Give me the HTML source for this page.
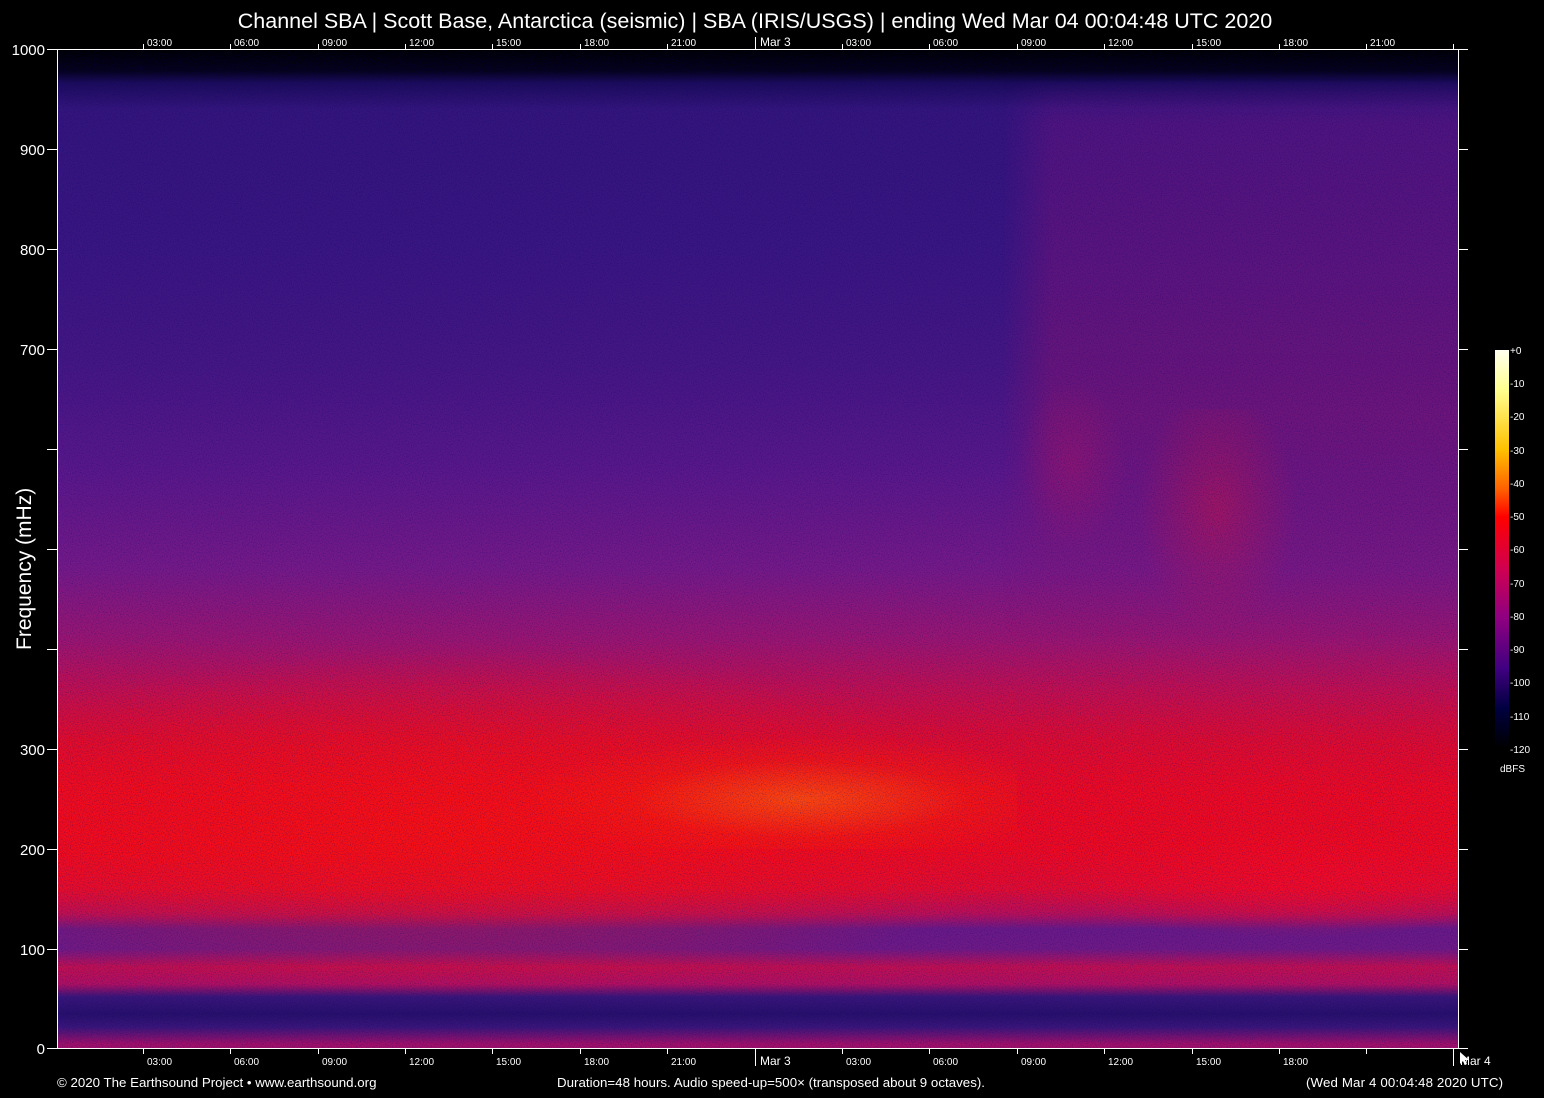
<!DOCTYPE html>
<html><head><meta charset="utf-8"><style>
html,body{margin:0;padding:0;background:#000;}
body{width:1544px;height:1098px;position:relative;overflow:hidden;font-family:"Liberation Sans",sans-serif;color:#fff;}
.t{position:absolute;white-space:nowrap;}
#plot{position:absolute;left:57px;top:49px;width:1401px;height:999px;overflow:hidden;
background:linear-gradient(to bottom,#000 0px,#05021a 22px,#1c0c5a 34px,#34157a 60px,#3a1680 200px,#461782 320px,#5a1888 420px,#761a86 520px,#9a1670 590px,#c01050 640px,#dc0c30 690px,#ec0a22 740px,#ee0a20 800px,#e20c30 840px,#b81058 865px,#6a1a86 880px,#701a84 900px,#c01050 918px,#b01060 935px,#3a1678 948px,#28106a 965px,#3a1678 978px,#a01068 995px);}
.ov{position:absolute;}
</style></head><body>
<div class="t" style="left:0;width:1510px;text-align:center;top:9px;font-size:21.5px;">Channel SBA | Scott Base, Antarctica (seismic) | SBA (IRIS/USGS) | ending Wed Mar 04 00:04:48 UTC 2020</div>
<div id="plot">
 <div class="ov" style="left:-200px;top:600px;width:1200px;height:350px;background:radial-gradient(ellipse at 50% 50%,rgba(255,20,10,0.6),rgba(255,0,0,0) 70%);"></div>
 <div class="ov" style="left:480px;top:690px;width:480px;height:110px;background:radial-gradient(ellipse at 55% 55%,rgba(255,90,10,0.75),rgba(255,40,0,0.3) 45%,rgba(255,0,0,0) 75%);"></div>
 <div class="ov" style="left:1000px;top:780px;width:401px;height:110px;background:radial-gradient(ellipse at 60% 50%,rgba(255,10,30,0.5),rgba(255,0,0,0) 70%);"></div>
 <div class="ov" style="left:945px;top:30px;width:456px;height:560px;background:linear-gradient(to bottom,rgba(120,20,130,0),rgba(120,20,130,0.4) 8%,rgba(140,20,110,0.5) 60%,rgba(140,20,110,0) 100%);-webkit-mask-image:linear-gradient(to right,transparent,#000 50px);mask-image:linear-gradient(to right,transparent,#000 50px);"></div>
 <div class="ov" style="left:1080px;top:360px;width:160px;height:220px;background:radial-gradient(ellipse at 50% 45%,rgba(200,20,70,0.5),rgba(200,20,70,0) 70%);"></div>
 <div class="ov" style="left:960px;top:330px;width:110px;height:170px;background:radial-gradient(ellipse at 50% 50%,rgba(200,20,90,0.3),rgba(200,20,70,0) 70%);"></div>
 <svg class="ov" style="left:0;top:0" width="1401" height="999"><filter id="n"><feTurbulence type="fractalNoise" baseFrequency="0.9" numOctaves="2" seed="3"/><feColorMatrix values="0 0 0 0 0  0 0 0 0 0  0 0 0 0 0.2  0 0 0 1.2 -0.55"/></filter><rect width="1401" height="999" filter="url(#n)" opacity="0.7"/></svg>
</div>
<svg style="position:absolute;left:0;top:0" width="1544" height="1098">
<g stroke="#fff" stroke-width="1" fill="none">
<line x1="57.5" y1="49" x2="57.5" y2="1049"/>
<line x1="1458.5" y1="49" x2="1458.5" y2="1049"/>
<line x1="47" y1="49.5" x2="1468" y2="49.5"/>
<line x1="47" y1="1048.5" x2="1468" y2="1048.5"/>
<path d="M47 149.5h10M47 249.5h10M47 349.5h10M47 449.5h10M47 549.5h10M47 649.5h10M47 749.5h10M47 849.5h10M47 949.5h10"/>
<path d="M1458 149.5h10M1458 249.5h10M1458 349.5h10M1458 449.5h10M1458 549.5h10M1458 649.5h10M1458 749.5h10M1458 849.5h10M1458 949.5h10"/>
<path d="M143.5 44v5M230.5 44v5M318.5 44v5M405.5 44v5M492.5 44v5M580.5 44v5M667.5 44v5M755.5 37v12M842.5 44v5M929.5 44v5M1017.5 44v5M1104.5 44v5M1192.5 44v5M1279.5 44v5M1366.5 44v5M1453.5 44v5"/>
<path d="M143.5 1049v5M230.5 1049v5M318.5 1049v5M405.5 1049v5M492.5 1049v5M580.5 1049v5M667.5 1049v5M755.5 1049v17M842.5 1049v5M929.5 1049v5M1017.5 1049v5M1104.5 1049v5M1192.5 1049v5M1279.5 1049v5M1366.5 1049v5M1453.5 1049v17"/>
</g>
<defs><linearGradient id="cb" x1="0" y1="0" x2="0" y2="1">
<stop offset="0" stop-color="#fffff0"/><stop offset="0.1" stop-color="#ffff90"/><stop offset="0.25" stop-color="#ffc000"/><stop offset="0.35" stop-color="#ff6000"/><stop offset="0.42" stop-color="#ff0000"/><stop offset="0.55" stop-color="#d00050"/><stop offset="0.67" stop-color="#900080"/><stop offset="0.8" stop-color="#400080"/><stop offset="0.9" stop-color="#000040"/><stop offset="1" stop-color="#000"/></linearGradient></defs>
<rect x="1495" y="350" width="14" height="398" fill="url(#cb)"/>
<g fill="#fff" font-family="Liberation Sans,sans-serif" font-size="10">
<text x="1510" y="354">+0</text><text x="1510" y="387">-10</text><text x="1510" y="420">-20</text><text x="1510" y="454">-30</text><text x="1510" y="487">-40</text><text x="1510" y="520">-50</text><text x="1510" y="553">-60</text><text x="1510" y="587">-70</text><text x="1510" y="620">-80</text><text x="1510" y="653">-90</text><text x="1510" y="686">-100</text><text x="1510" y="720">-110</text><text x="1510" y="753">-120</text><text x="1500" y="772">dBFS</text>
</g>
<g fill="#fff" font-family="Liberation Sans,sans-serif" font-size="15" text-anchor="end">
<text x="45" y="55">1000</text><text x="45" y="155">900</text><text x="45" y="255">800</text><text x="45" y="355">700</text><text x="45" y="755">300</text><text x="45" y="855">200</text><text x="45" y="955">100</text><text x="45" y="1054">0</text>
</g>
<g fill="#fff" font-family="Liberation Sans,sans-serif" font-size="10">
<text x="147" y="46">03:00</text><text x="234" y="46">06:00</text><text x="322" y="46">09:00</text><text x="409" y="46">12:00</text><text x="496" y="46">15:00</text><text x="584" y="46">18:00</text><text x="671" y="46">21:00</text><text x="760" y="46" font-size="12">Mar  3</text><text x="846" y="46">03:00</text><text x="933" y="46">06:00</text><text x="1021" y="46">09:00</text><text x="1108" y="46">12:00</text><text x="1196" y="46">15:00</text><text x="1283" y="46">18:00</text><text x="1370" y="46">21:00</text>
<text x="147" y="1065">03:00</text><text x="234" y="1065">06:00</text><text x="322" y="1065">09:00</text><text x="409" y="1065">12:00</text><text x="496" y="1065">15:00</text><text x="584" y="1065">18:00</text><text x="671" y="1065">21:00</text><text x="760" y="1065" font-size="12">Mar  3</text><text x="846" y="1065">03:00</text><text x="933" y="1065">06:00</text><text x="1021" y="1065">09:00</text><text x="1108" y="1065">12:00</text><text x="1196" y="1065">15:00</text><text x="1283" y="1065">18:00</text><text x="1460" y="1065" font-size="12">Mar  4</text>
</g>
<text transform="translate(31,650) rotate(-90)" fill="#fff" font-family="Liberation Sans,sans-serif" font-size="21">Frequency (mHz)</text>
<g fill="#fff" font-family="Liberation Sans,sans-serif" font-size="13.3">
<text x="57" y="1087">© 2020 The Earthsound Project • www.earthsound.org</text>
<text x="557" y="1087" textLength="428">Duration=48 hours. Audio speed-up=500× (transposed about 9 octaves).</text>
<text x="1306" y="1087" textLength="197">(Wed Mar  4 00:04:48 2020 UTC)</text>
</g>
<path d="M1460 1052l0 12 3-3 2 4 2-1-2-4 4 0z" fill="#fff"/>
</svg>
</body></html>
